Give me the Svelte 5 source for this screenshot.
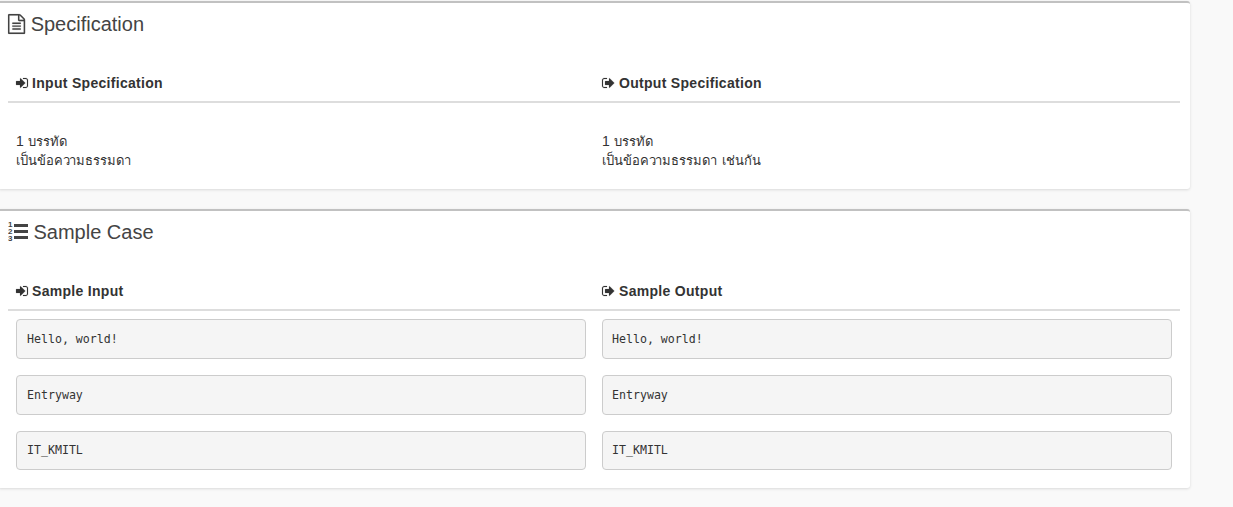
<script>
  const samples = ['Hello, world!', 'Entryway', 'IT_KMITL'];
</script>

{#snippet signIn()}
  <svg class="icon in" viewBox="0 0 1536 1792" aria-hidden="true"><path d="M1184 896q0 26-19 45l-544 544q-19 19-45 19t-45-19-19-45v-288h-448q-26 0-45-19t-19-45v-384q0-26 19-45t45-19h448v-288q0-26 19-45t45-19 45 19l544 544q19 19 19 45zm352-352v704q0 119-84.5 203.5t-203.5 84.5h-320q-13 0-22.5-9.5t-9.5-22.5q0-4-1-20t-.5-26.5 3-23.5 10-19.5 20.5-6.5h320q66 0 113-47t47-113v-704q0-66-47-113t-113-47h-312l-11.5-1-11.5-3-8-5.5-7-9-2-13.5q0-4-1-20t-.5-26.5 3-23.5 10-19.5 20.5-6.5h320q119 0 203.5 84.5t84.5 203.5z" /></svg>
{/snippet}

{#snippet signOut()}
  <svg class="icon out" viewBox="64 0 1664 1792" aria-hidden="true"><path d="M704 1440q0 4 1 20t.5 26.5-3 23.5-10 19.5-20.5 6.5h-320q-119 0-203.5-84.5t-84.5-203.5v-704q0-119 84.5-203.5t203.5-84.5h320q13 0 22.5 9.5t9.5 22.5q0 4 1 20t.5 26.5-3 23.5-10 19.5-20.5 6.5h-320q-66 0-113 47t-47 113v704q0 66 47 113t113 47h312l11.5 1 11.5 3 8 5.5 7 9 2 13.5zm928-544q0 26-19 45l-544 544q-19 19-45 19t-45-19-19-45v-288h-448q-26 0-45-19t-19-45v-384q0-26 19-45t45-19h448v-288q0-26 19-45t45-19 45 19l544 544q19 19 19 45z" /></svg>
{/snippet}

<main>
  <section class="box spec">
    <h2>
      <svg class="file" viewBox="128 0 1536 1792" aria-hidden="true"><path d="M1596 380q28 28 48 76t20 88v1152q0 40-28 68t-68 28h-1344q-40 0-68-28t-28-68v-1600q0-40 28-68t68-28h896q40 0 88 20t76 48zm-444-244v376h376q-10-29-22-41l-313-313q-12-12-41-22zm384 1528v-1024h-416q-40 0-68-28t-28-68v-416h-768v1536h1280zm-1024-864q0-14 9-23t23-9h704q14 0 23 9t9 23v64q0 14-9 23t-23 9h-704q-14 0-23-9t-9-23v-64zm736 224q14 0 23 9t9 23v64q0 14-9 23t-23 9h-704q-14 0-23-9t-9-23v-64q0-14 9-23t23-9h704zm0 256q14 0 23 9t9 23v64q0 14-9 23t-23 9h-704q-14 0-23-9t-9-23v-64q0-14 9-23t23-9h704z" /></svg>
      <span>Specification</span>
    </h2>
    <div class="row head">
      <div class="cell">{@render signIn()}<span>Input Specification</span></div>
      <div class="cell">{@render signOut()}<span>Output Specification</span></div>
    </div>
    <div class="row body">
      <p>1 <span>บรรทัด</span></p>
      <p>1 <span>บรรทัด</span></p>
      <p><span>เป็นข้อความธรรมดา</span></p>
      <p><span>เป็นข้อความธรรมดา เช่นกัน</span></p>
    </div>
  </section>

  <section class="box cases">
    <h2>
      <svg class="list" viewBox="0 0 20 22" aria-hidden="true">
        <path d="M6 3h14v3H6zM6 9h14v3H6zM6 15h14v3H6z" />
        <text x="0" y="6.2">1</text>
        <text x="0" y="13.2">2</text>
        <text x="0" y="20.4">3</text>
      </svg>
      <span>Sample Case</span>
    </h2>
    <div class="row head">
      <div class="cell">{@render signIn()}<span>Sample Input</span></div>
      <div class="cell">{@render signOut()}<span>Sample Output</span></div>
    </div>
    {#each samples as sample}
      <div class="row sample">
        <pre>{sample}</pre>
        <pre>{sample}</pre>
      </div>
    {/each}
  </section>
</main>

<style>
  :global(body) {
    background: #f9f9f9;
    color: #333;
    font: 14px/20px "Liberation Sans", Arial, sans-serif;
    overflow: hidden;
  }
  main {
    box-sizing: border-box;
    height: 507px;
    padding-top: 1px;
  }
  .box {
    box-sizing: border-box;
    width: 1192px;
    margin: 0 0 20px -2px;
    padding: 0 10px;
    background: #fff;
    border-top: 2px solid #c1c1c1;
    border-radius: 3px;
    box-shadow: 0 1px 3px rgba(0, 0, 0, 0.13);
  }
  .spec { height: 188px; }
  .cases { height: 279px; }
  h2 {
    display: flex;
    align-items: center;
    box-sizing: border-box;
    height: 61px;
    margin: 0;
    padding-bottom: 19px;
    color: #444;
    font-size: 20px;
    font-weight: 400;
    line-height: 22px;
  }
  svg { flex: none; fill: currentColor; }
  .file { width: 17.14px; height: 20px; margin-right: 5.5px; stroke: currentColor; stroke-width: 12; overflow: visible; }
  .list { width: 20px; height: 22px; margin-right: 5.5px; }
  .list text { font: bold 8px "Liberation Sans", Arial, sans-serif; }
  .row {
    display: grid;
    grid-template-columns: 1fr 1fr;
  }
  .head {
    box-sizing: border-box;
    height: 39px;
    border-bottom: 2px solid #ddd;
    font-weight: 700;
  }
  .cell {
    display: flex;
    align-items: center;
    height: 37px;
    padding: 0 8px;
    letter-spacing: 0.3px;
  }
  .icon { height: 14px; margin-right: 4px; stroke: currentColor; stroke-width: 20; overflow: visible; }
  .in { width: 12px; }
  .out { width: 13px; }
  .body { padding-top: 28px; grid-auto-rows: 20px; }
  .body p { height: 20px; margin: 0; padding: 0 8px; white-space: nowrap; }
  .body p:nth-child(n + 3) { line-height: 18px; }
  .body span { font-size: 13px; letter-spacing: -0.08px; word-spacing: 1.5px; }
  .body p:first-child span, .body p:nth-child(2) span { letter-spacing: 0.15px; }
  pre {
    box-sizing: border-box;
    height: 40px;
    margin: 8px 8px 0;
    padding: 9px 10px;
    background: #f5f5f5;
    border: 1px solid #ccc;
    border-radius: 4px;
    font: 11.6px/20px "DejaVu Sans Mono", monospace;
  }
  pre + pre { padding-left: 9px; }
  .sample + .sample { padding-top: 8px; }
  .sample:last-child pre { height: 39px; line-height: 19px; }
</style>
